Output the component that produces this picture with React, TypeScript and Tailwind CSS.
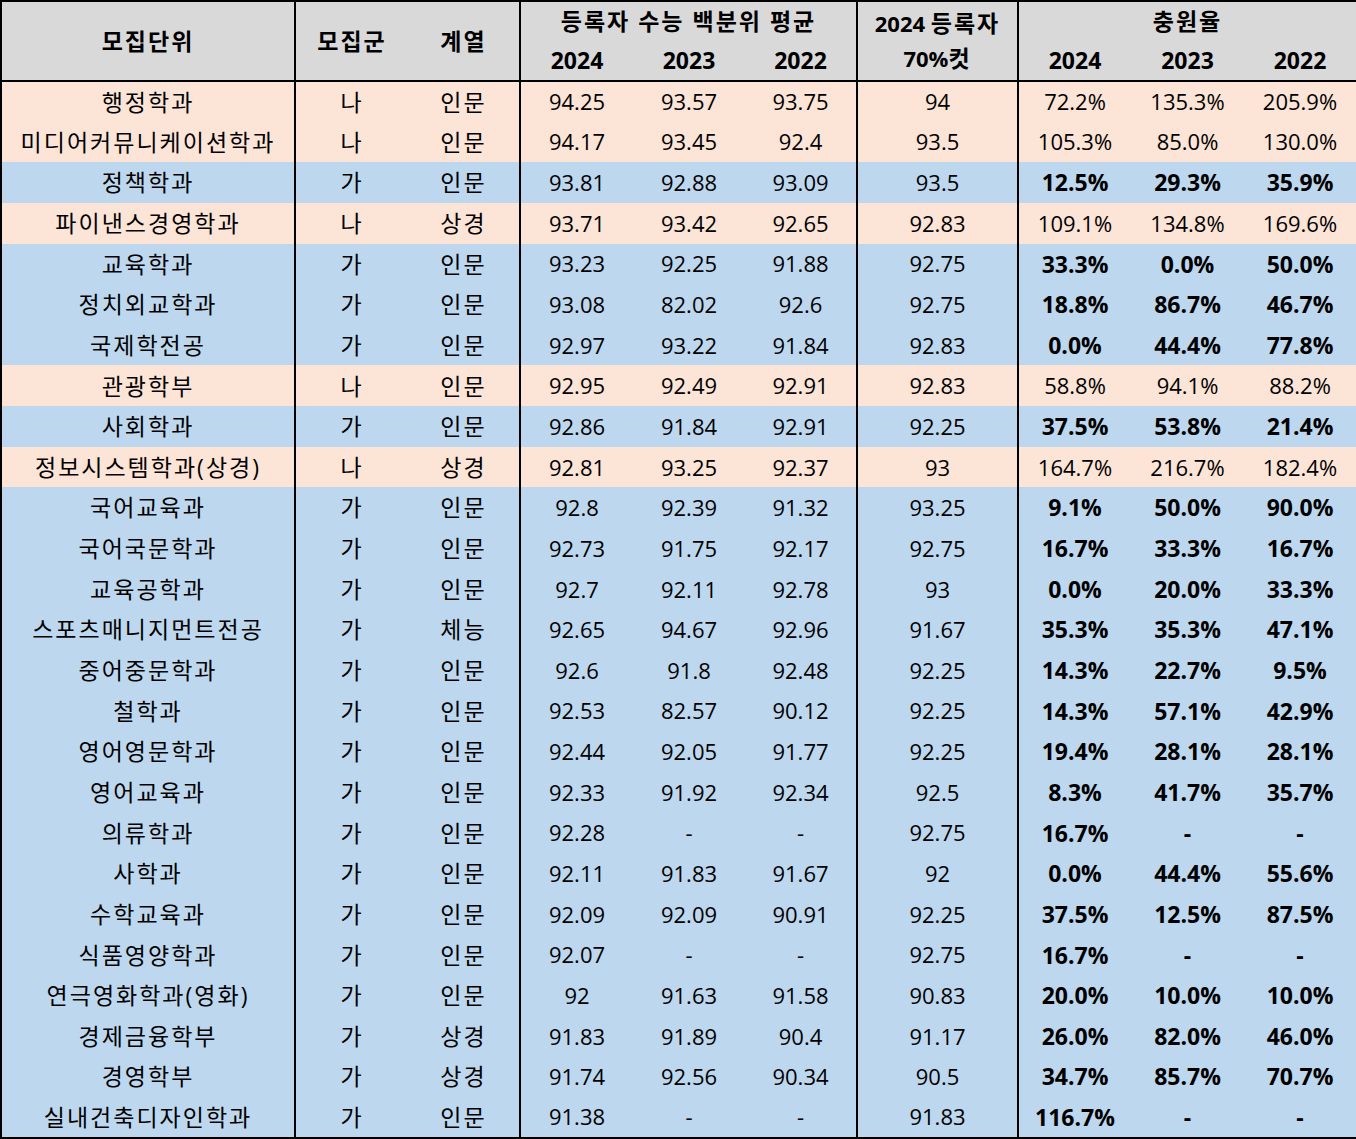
const rows: [string, string, string, string, string, string, string, string, string, string][] = [
  ["행정학과", "나", "인문", "94.25", "93.57", "93.75", "94", "72.2%", "135.3%", "205.9%"],
  ["미디어커뮤니케이션학과", "나", "인문", "94.17", "93.45", "92.4", "93.5", "105.3%", "85.0%", "130.0%"],
  ["정책학과", "가", "인문", "93.81", "92.88", "93.09", "93.5", "12.5%", "29.3%", "35.9%"],
  ["파이낸스경영학과", "나", "상경", "93.71", "93.42", "92.65", "92.83", "109.1%", "134.8%", "169.6%"],
  ["교육학과", "가", "인문", "93.23", "92.25", "91.88", "92.75", "33.3%", "0.0%", "50.0%"],
  ["정치외교학과", "가", "인문", "93.08", "82.02", "92.6", "92.75", "18.8%", "86.7%", "46.7%"],
  ["국제학전공", "가", "인문", "92.97", "93.22", "91.84", "92.83", "0.0%", "44.4%", "77.8%"],
  ["관광학부", "나", "인문", "92.95", "92.49", "92.91", "92.83", "58.8%", "94.1%", "88.2%"],
  ["사회학과", "가", "인문", "92.86", "91.84", "92.91", "92.25", "37.5%", "53.8%", "21.4%"],
  ["정보시스템학과(상경)", "나", "상경", "92.81", "93.25", "92.37", "93", "164.7%", "216.7%", "182.4%"],
  ["국어교육과", "가", "인문", "92.8", "92.39", "91.32", "93.25", "9.1%", "50.0%", "90.0%"],
  ["국어국문학과", "가", "인문", "92.73", "91.75", "92.17", "92.75", "16.7%", "33.3%", "16.7%"],
  ["교육공학과", "가", "인문", "92.7", "92.11", "92.78", "93", "0.0%", "20.0%", "33.3%"],
  ["스포츠매니지먼트전공", "가", "체능", "92.65", "94.67", "92.96", "91.67", "35.3%", "35.3%", "47.1%"],
  ["중어중문학과", "가", "인문", "92.6", "91.8", "92.48", "92.25", "14.3%", "22.7%", "9.5%"],
  ["철학과", "가", "인문", "92.53", "82.57", "90.12", "92.25", "14.3%", "57.1%", "42.9%"],
  ["영어영문학과", "가", "인문", "92.44", "92.05", "91.77", "92.25", "19.4%", "28.1%", "28.1%"],
  ["영어교육과", "가", "인문", "92.33", "91.92", "92.34", "92.5", "8.3%", "41.7%", "35.7%"],
  ["의류학과", "가", "인문", "92.28", "-", "-", "92.75", "16.7%", "-", "-"],
  ["사학과", "가", "인문", "92.11", "91.83", "91.67", "92", "0.0%", "44.4%", "55.6%"],
  ["수학교육과", "가", "인문", "92.09", "92.09", "90.91", "92.25", "37.5%", "12.5%", "87.5%"],
  ["식품영양학과", "가", "인문", "92.07", "-", "-", "92.75", "16.7%", "-", "-"],
  ["연극영화학과(영화)", "가", "인문", "92", "91.63", "91.58", "90.83", "20.0%", "10.0%", "10.0%"],
  ["경제금융학부", "가", "상경", "91.83", "91.89", "90.4", "91.17", "26.0%", "82.0%", "46.0%"],
  ["경영학부", "가", "상경", "91.74", "92.56", "90.34", "90.5", "34.7%", "85.7%", "70.7%"],
  ["실내건축디자인학과", "가", "인문", "91.38", "-", "-", "91.83", "116.7%", "-", "-"],
];

// hangul in the sheet is set wider than the digits
const ko = "text-[23px] tracking-[2px]";

export default function App() {
  return (
    <div className="w-[1356px] bg-white text-black font-['Open_Sans','Noto_Sans_CJK_KR',sans-serif] text-[22px]">
      <table className="w-full table-fixed border-collapse border-2 border-black text-center">
        <colgroup>
          <col className="w-[294px]" />
          <col className="w-[113px]" />
          <col className="w-[112px]" />
          <col className="w-[113px]" />
          <col className="w-[112px]" />
          <col className="w-[112px]" />
          <col className="w-[161px]" />
          <col className="w-[113px]" />
          <col className="w-[113px]" />
          <col className="w-[113px]" />
        </colgroup>
        <thead className="bg-[#d9d9d9] font-bold">
          <tr className="h-[40px]">
            <th rowSpan={2} className={`border-r-2 border-black ${ko}`}>모집단위</th>
            <th rowSpan={2} className={ko}>모집군</th>
            <th rowSpan={2} className={`border-r-2 border-black ${ko}`}>계열</th>
            <th colSpan={3} className={`border-r-2 border-black leading-none ${ko}`}>등록자 수능 백분위 평균</th>
            <th rowSpan={2} className="border-r-2 border-black leading-[35px]">
              2024 <span className={ko}>등록자</span>
              <br />
              70%<span className={ko}>컷</span>
            </th>
            <th colSpan={3} className={`leading-none ${ko}`}>충원율</th>
          </tr>
          <tr className="h-[40px] border-b-2 border-black text-[23px]">
            <th>2024</th>
            <th>2023</th>
            <th className="border-r-2 border-black">2022</th>
            <th>2024</th>
            <th>2023</th>
            <th>2022</th>
          </tr>
        </thead>
        <tbody>
          {rows.map((r) => {
            const peach = r[1] === "나";
            const rate = peach ? "font-normal" : "font-bold text-[23px]";
            return (
              <tr key={r[0]} className={`h-[40.65px] ${peach ? "bg-[#fce4d6]" : "bg-[#bdd7ee]"}`}>
                <td className={`border-r-2 border-black ${ko}`}>{r[0]}</td>
                <td className={ko}>{r[1]}</td>
                <td className={`border-r-2 border-black ${ko}`}>{r[2]}</td>
                <td>{r[3]}</td>
                <td>{r[4]}</td>
                <td className="border-r-2 border-black">{r[5]}</td>
                <td className="border-r-2 border-black">{r[6]}</td>
                <td className={rate}>{r[7]}</td>
                <td className={rate}>{r[8]}</td>
                <td className={rate}>{r[9]}</td>
              </tr>
            );
          })}
        </tbody>
      </table>
    </div>
  );
}
